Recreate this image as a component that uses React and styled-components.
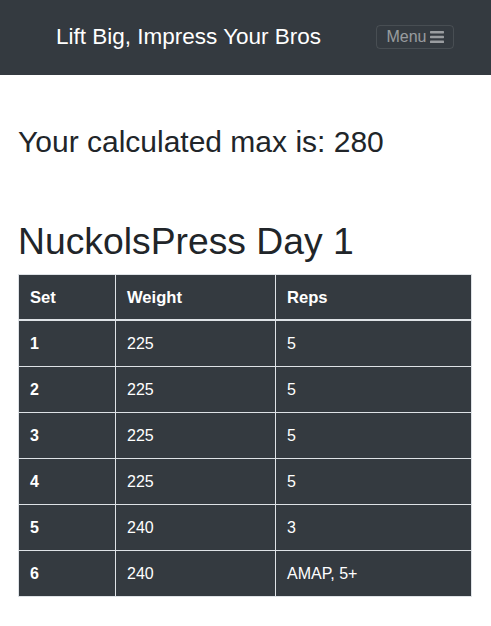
import styled, { createGlobalStyle } from 'styled-components'

const GlobalStyle = createGlobalStyle`
  body {
    margin: 0;
    font-family: "Liberation Sans", Arial, sans-serif;
    color: #212529;
    background: #fff;
  }
`

const Navbar = styled.nav`
  height: 75px;
  background: #343a40;
  display: flex;
  align-items: center;
  justify-content: space-between;
  padding: 0 37px 0 56px;
  box-sizing: border-box;
`

const Brand = styled.span`
  color: #fff;
  font-size: 22.5px;
  line-height: 1;
  margin-bottom: 1px;
`

const MenuButton = styled.button`
  display: flex;
  align-items: center;
  gap: 3px;
  height: 24px;
  width: 78px;
  justify-content: center;
  background: transparent;
  border: 1px solid rgba(255, 255, 255, 0.1);
  border-radius: 4px;
  color: rgba(255, 255, 255, 0.5);
  font-family: inherit;
  font-size: 16px;
  padding: 0;
  margin-top: -1px;
`

const Main = styled.main`
  padding: 0 18px;
`

const MaxTitle = styled.h2`
  margin: 49px 0 0;
  font-size: 30px;
  font-weight: 400;
  line-height: 1.2;
`

const DayTitle = styled.h1`
  margin: 59px 0 10.5px;
  font-size: 37.3px;
  font-weight: 400;
  line-height: 1.2;
`

const Table = styled.table`
  width: 454px;
  border-collapse: collapse;
  background: #343a40;
  color: #fff;
  font-size: 16px;
  border: 1px solid #dee2e6;
`

const Cell = styled.td`
  border: 1px solid #dee2e6;
  padding: 11px 11px;
  line-height: 23px;
  text-align: left;
  vertical-align: middle;
  font-weight: ${p => (p.$bold ? 700 : 400)};
  width: ${p => p.$w || 'auto'};
`

const HeadCell = styled(Cell).attrs({ as: 'th' })`
  border-bottom-width: 2px;
  padding-bottom: 10px;
  font-size: 16.6px;
`

const rows = [
  [1, 225, '5'],
  [2, 225, '5'],
  [3, 225, '5'],
  [4, 225, '5'],
  [5, 240, '3'],
  [6, 240, 'AMAP, 5+'],
]

function BarsIcon() {
  return (
    <svg width="14" height="12" viewBox="0 0 14 12" fill="currentColor">
      <rect x="0" y="0" width="14" height="2.4" rx="0.6" />
      <rect x="0" y="4.8" width="14" height="2.4" rx="0.6" />
      <rect x="0" y="9.6" width="14" height="2.4" rx="0.6" />
    </svg>
  )
}

export default function App() {
  return (
    <>
      <GlobalStyle />
      <Navbar>
        <Brand>Lift Big, Impress Your Bros</Brand>
        <MenuButton>
          Menu <BarsIcon />
        </MenuButton>
      </Navbar>
      <Main>
        <MaxTitle>Your calculated max is: 280</MaxTitle>
        <DayTitle>NuckolsPress Day 1</DayTitle>
        <Table>
          <thead>
            <tr>
              <HeadCell $bold $w="74px">Set</HeadCell>
              <HeadCell $bold $w="137px">Weight</HeadCell>
              <HeadCell $bold>Reps</HeadCell>
            </tr>
          </thead>
          <tbody>
            {rows.map(([set, weight, reps]) => (
              <tr key={set}>
                <Cell as="th" $bold>{set}</Cell>
                <Cell>{weight}</Cell>
                <Cell>{reps}</Cell>
              </tr>
            ))}
          </tbody>
        </Table>
      </Main>
    </>
  )
}
